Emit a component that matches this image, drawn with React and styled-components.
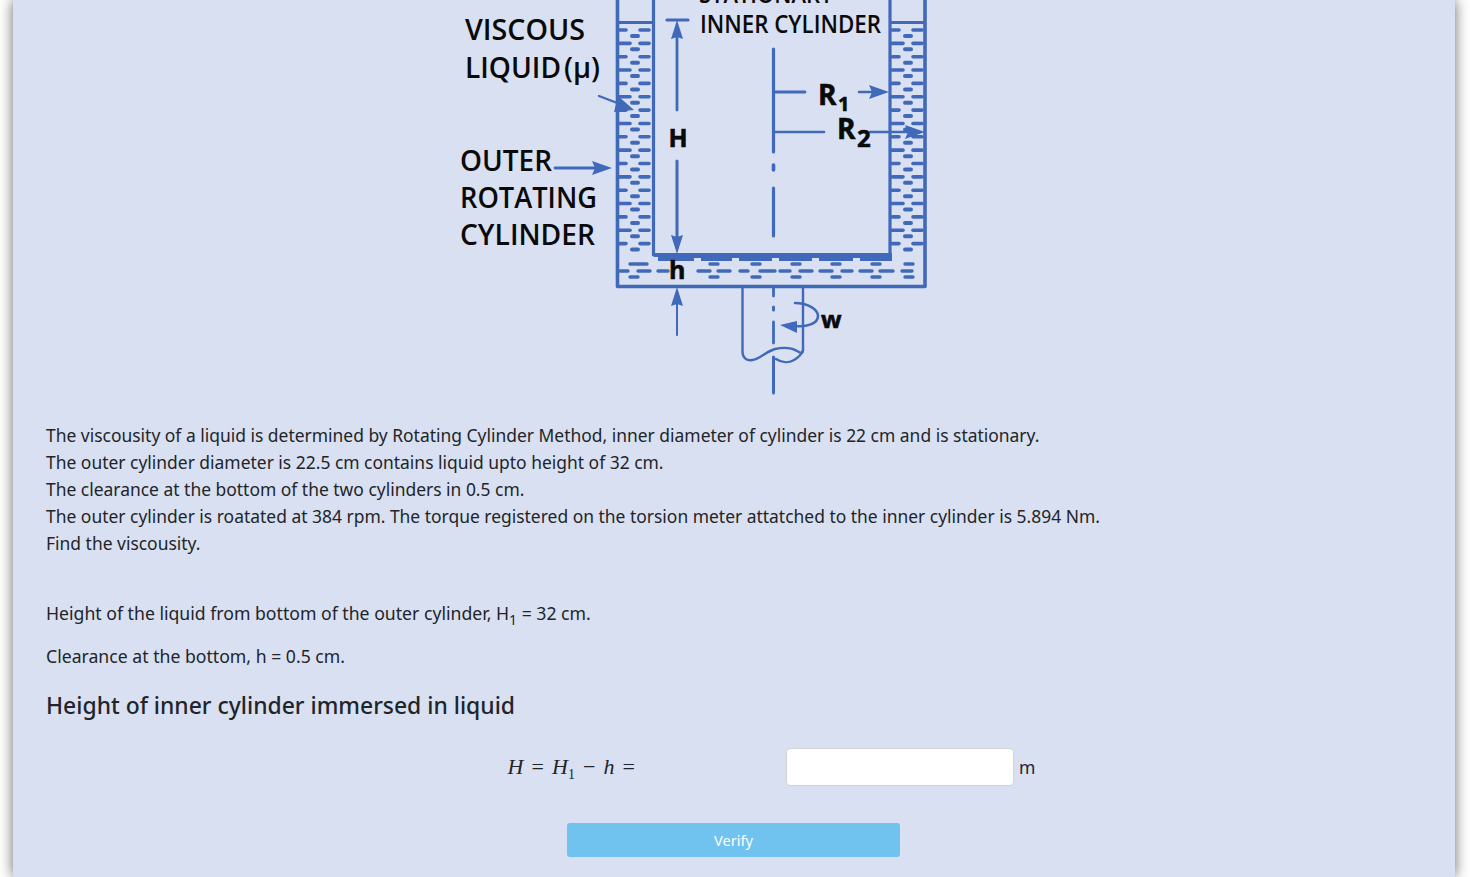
import React from 'react'
import styled, { createGlobalStyle } from 'styled-components'

const GlobalStyle = createGlobalStyle`
  html, body {
    margin: 0;
    padding: 0;
    height: 877px;
    overflow: hidden;
    background: #fff;
  }
`

const Card = styled.main`
  box-sizing: border-box;
  margin: 0 15px 0 13px;
  height: 877px;
  padding: 0 33px;
  overflow: hidden;
  background: #d9e0f1;
  box-shadow: 0 0 13px rgba(0, 0, 0, 0.6);
  color: #212529;
  font-family: 'Noto Sans', 'Open Sans', sans-serif;
  font-size: 17.45px;
`

const Figure = styled.figure`
  display: flex;
  justify-content: center;
  margin: 0 0 22px;
  height: 400px;
`

const Paragraph = styled.p`
  margin: 0 0 ${props => props.gap || 16}px;
  font-size: ${props => props.size || 17.45}px;
  line-height: 27px;
  sub { font-size: 14px; line-height: 0; }
`

const Heading = styled.h4`
  margin: 20.5px 0 27px;
  font-size: 22.9px;
  font-weight: 500;
  line-height: 30px;
`

const AnswerRow = styled.div`
  display: grid;
  grid-template-columns: 740px 228px auto;
  align-items: center;
  height: 38px;
`

const MathExpr = styled.span`
  justify-self: end;
  margin-right: 151px;
  font-family: 'Liberation Serif', serif;
  font-size: 22px;
  word-spacing: 2.6px;
  white-space: nowrap;
  i { font-style: italic; }
  sub { font-size: 14px; line-height: 0; }
`

const AnswerInput = styled.input`
  box-sizing: border-box;
  width: 228px;
  height: 38px;
  border: 1px solid #ced4da;
  border-radius: 4px;
  background: #fff;
`

const Unit = styled.span`
  margin-left: 5px;
  font-size: 17.5px;
`

const VerifyButton = styled.button`
  display: block;
  width: 333px;
  height: 34px;
  margin: 37px 0 0 521px;
  border: 0;
  border-radius: 3px;
  background: #6fc3ee;
  color: #fff;
  font-family: inherit;
  font-size: 14.6px;
`

const BLUE = '#4169b9'

const Arrow = ({ x, y, dir }) => {
  const pts = {
    up: `${x},${y} ${x - 6},${y + 19} ${x},${y + 17} ${x + 6},${y + 19}`,
    down: `${x},${y} ${x - 6},${y - 19} ${x},${y - 17} ${x + 6},${y - 19}`,
    right: `${x},${y} ${x - 20},${y - 7} ${x - 17},${y} ${x - 20},${y + 7}`,
  }
  return <polygon points={pts[dir]} fill={BLUE} />
}

// one channel of liquid, the dashes repeat every 13.3px down the wall
const channelRows = Array.from({ length: 17 }, (_, i) => 30 + i * 13.35)

const Channel = ({ x }) => (
  <g stroke={BLUE} strokeLinecap="round">
    {channelRows.map((y, i) => (
      <g key={y}>
        <line x1={x + 2} y1={y} x2={x + (i % 2 ? 13 : 9)} y2={y} strokeWidth="3.6" />
        <line x1={x + 23} y1={y} x2={x + 32} y2={y} strokeWidth="3.6" />
        <line x1={x + 15} y1={y + 6} x2={x + 21} y2={y + 6} strokeWidth="4" />
      </g>
    ))}
  </g>
)

const topDashes = [630, 639, 710, 752, 792, 832, 872, 905]
const midDashes = [[620, 628], [638, 650], [658, 668], [698, 710], [718, 730], [740, 748], [760, 775], [780, 790], [800, 812], [820, 832], [842, 852], [860, 872], [880, 893], [902, 912]]
const notches = [694, 732, 772, 812, 853]

const LABELS = [
  { x: 699, y: 3, size: 24.5, width: 134, text: 'STATIONARY' },
  { x: 700, y: 33, size: 24.5, width: 181, text: 'INNER CYLINDER' },
  { x: 465, y: 40, size: 29.5, width: 120, text: 'VISCOUS' },
  { x: 465, y: 78, size: 29.5, width: 96, text: 'LIQUID' },
  { x: 564, y: 78, size: 28, width: 36, text: '(µ)' },
  { x: 460, y: 171, size: 29.5, width: 92, text: 'OUTER' },
  { x: 460, y: 208, size: 29.5, width: 137, text: 'ROTATING' },
  { x: 460, y: 245, size: 29.5, width: 135, text: 'CYLINDER' },
]

const Diagram = () => (
  <svg width="600" height="400" viewBox="434 0 600 400" role="img" aria-label="Rotating cylinder viscometer">
    {/* cylinders */}
    <g fill="none" stroke={BLUE} strokeLinejoin="round">
      <path d="M617.5 0V286.5H925V0" strokeWidth="3.6" />
      <path d="M653.5 0V255H890V0" strokeWidth="3.2" />
      <path d="M617 22.5H653M890 22.5H925" strokeWidth="3" />
    </g>
    <Channel x={617} />
    <Channel x={890} />

    {/* bottom clearance */}
    <path d="M654 253H892V261H658V257H654z" fill={BLUE} />
    {notches.map(x => <rect key={x} x={x} y="258" width="7" height="3.5" fill="#d9e0f1" />)}
    <g stroke={BLUE} strokeLinecap="round" strokeWidth="3.4">
      {topDashes.map(x => <line key={`t${x}`} x1={x} y1="264" x2={x + 8} y2="264" />)}
      {midDashes.map(([a, b]) => <line key={`m${a}`} x1={a} y1="271" x2={b} y2="271" />)}
      {topDashes.filter(x => x !== 639).map(x => <line key={`b${x}`} x1={x} y1="277" x2={x + 8} y2="277" />)}
    </g>

    {/* height marker */}
    <g stroke={BLUE} fill="none" strokeLinecap="round">
      <line x1="667" y1="20" x2="688" y2="20" strokeWidth="3.2" />
      <line x1="677" y1="30" x2="677" y2="110" strokeWidth="2.8" />
      <line x1="677" y1="161" x2="677" y2="240" strokeWidth="3" />
      <line x1="677" y1="300" x2="677" y2="335" strokeWidth="2" />
    </g>
    <Arrow x={677} y={20} dir="up" />
    <Arrow x={677} y={254} dir="down" />
    <Arrow x={677} y={287} dir="up" />

    {/* radii and centre line */}
    <g stroke={BLUE} fill="none" strokeLinecap="round">
      <line x1="773.5" y1="49" x2="773.5" y2="152" strokeWidth="3.2" />
      <line x1="773.5" y1="165" x2="773.5" y2="170" strokeWidth="3.6" />
      <line x1="773.5" y1="188" x2="773.5" y2="236" strokeWidth="3.2" />
      <line x1="775" y1="92" x2="805" y2="92" strokeWidth="2.8" />
      <line x1="775" y1="132" x2="824" y2="132" strokeWidth="2.6" />
      <line x1="859" y1="92" x2="880" y2="92" strokeWidth="2.6" />
      <line x1="870" y1="132" x2="915" y2="132" strokeWidth="2.4" />
    </g>
    <Arrow x={889} y={92} dir="right" />
    <Arrow x={925} y={132} dir="right" />

    {/* label arrows */}
    <g stroke={BLUE} fill="none" strokeLinecap="round">
      <line x1="599" y1="96" x2="625" y2="106" strokeWidth="2.4" />
      <line x1="555" y1="168" x2="598" y2="168" strokeWidth="2.8" />
    </g>
    <polygon points="634,110 614,112 618,96" fill={BLUE} />
    <Arrow x={612} y={168} dir="right" />

    {/* shaft */}
    <g stroke={BLUE} fill="none" strokeLinecap="round" strokeWidth="2.4">
      <path d="M742.5 288V352C742.5 358 747 361 752 360C760 359 765 352 775 349C784 347 792 348 797 351C803 355 803 352 803 350V288" />
      <path d="M776 359C782 363 789 363 794 360C799 357 802 354 803 350" />
      <path d="M795 303C807 303 818 309 818 316C818 324 806 327 796 326" strokeWidth="2.6" />
      <line x1="773.5" y1="288" x2="773.5" y2="296" strokeWidth="2.8" />
      <line x1="773.5" y1="307" x2="773.5" y2="310" strokeWidth="3" />
      <line x1="773.5" y1="322" x2="773.5" y2="343" strokeWidth="2.8" />
      <line x1="773.5" y1="357" x2="773.5" y2="393" strokeWidth="3" />
    </g>
    <polygon points="780,325 797,321 797,333" fill={BLUE} />

    {/* labels */}
    <g fontFamily="'Open Sans', sans-serif" fontWeight="600" fill="#0a0a0a">
      {LABELS.map(l => (
        <text key={l.text} x={l.x} y={l.y} fontSize={l.size} textLength={l.width} lengthAdjust="spacingAndGlyphs">{l.text}</text>
      ))}
    </g>
    <g fontFamily="'Open Sans', sans-serif" fontWeight="700" fill="#0a0a0a" stroke="#0a0a0a" strokeWidth="0.6">
      <text x="668.5" y="147" fontSize="25">H</text>
      <text x="669" y="279" fontSize="25">h</text>
      <text x="818" y="105" fontSize="28">R</text>
      <text x="838" y="111" fontSize="20">1</text>
      <text x="837" y="139" fontSize="28">R</text>
      <text x="857" y="147" fontSize="24">2</text>
      <text x="821" y="328" fontSize="24">w</text>
    </g>
  </svg>
)

export default function App() {
  return (
    <>
      <GlobalStyle />
      <Card>
        <Figure>
          <Diagram />
        </Figure>
        <Paragraph gap={43}>
          The viscousity of a liquid is determined by Rotating Cylinder Method, inner diameter of cylinder is 22 cm and is stationary.<br />
          The outer cylinder diameter is 22.5 cm contains liquid upto height of 32 cm.<br />
          The clearance at the bottom of the two cylinders in 0.5 cm.<br />
          The outer cylinder is roatated at 384 rpm. The torque registered on the torsion meter attatched to the inner cylinder is 5.894 Nm.<br />
          Find the viscousity.
        </Paragraph>
        <Paragraph size={17.65}>Height of the liquid from bottom of the outer cylinder, H<sub>1</sub> = 32 cm.</Paragraph>
        <Paragraph size={17.65}>Clearance at the bottom, h = 0.5 cm.</Paragraph>
        <Heading>Height of inner cylinder immersed in liquid</Heading>
        <AnswerRow>
          <MathExpr><i>H</i> = <i>H</i><sub>1</sub> − <i>h</i> =</MathExpr>
          <AnswerInput type="text" />
          <Unit>m</Unit>
        </AnswerRow>
        <VerifyButton type="button">Verify</VerifyButton>
      </Card>
    </>
  )
}
